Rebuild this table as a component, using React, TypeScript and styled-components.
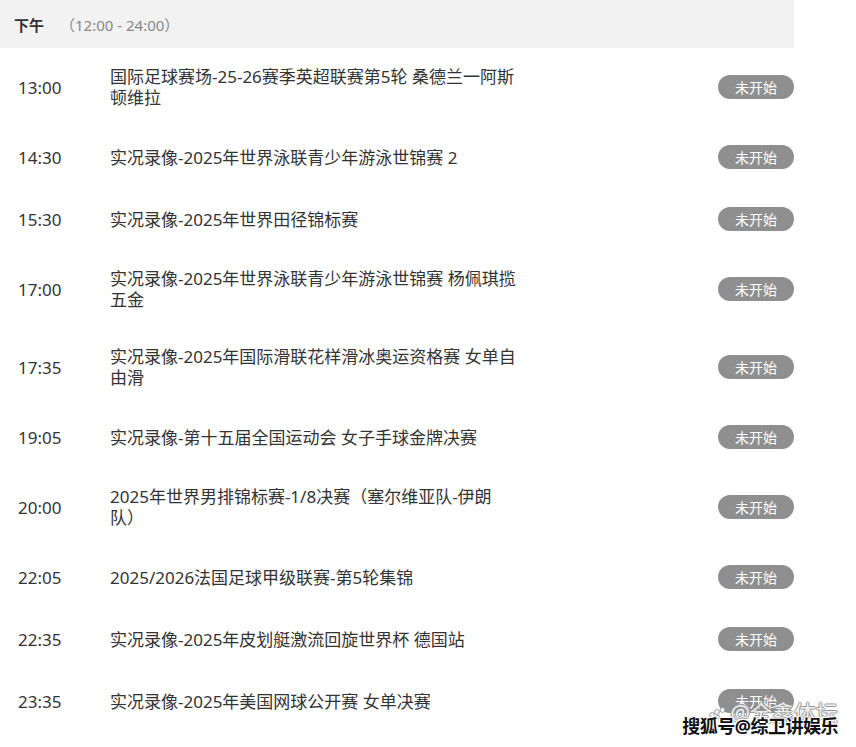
import React from "react";
import styled, {createGlobalStyle} from "styled-components";

const GlobalStyle = createGlobalStyle`
  html, body {
    margin: 0;
    padding: 0;
    background: #fff;
  }
  body {
    font-family: "Noto Sans", "Noto Sans CJK SC", sans-serif;
    color: #333;
    text-spacing-trim: space-all;
  }
`

const Page = styled.div`
  position: relative;
  width: 856px;
  height: 747px;
  overflow: hidden;
  background: #fff;
`

const Schedule = styled.div`
  width: 794px;
`

const Header = styled.div`
  height: 48px;
  background: #f2f2f2;
  display: flex;
  align-items: center;
  padding-left: 14px;
`

const Period = styled.span`
  font-size: 15px;
  font-weight: bold;
  color: #333;
  margin-right: 16px;
`

const Range = styled.span`
  font-size: 15px;
  color: #888;
`

const Row = styled.div`
  display: flex;
  align-items: center;
  padding: 18px 0 18px 18px;
`

const Time = styled.div`
  width: 92px;
  flex-shrink: 0;
  font-size: 17px;
  line-height: 21px;
  color: #333;
`

const Title = styled.div`
  width: 412px;
  font-size: 17px;
  line-height: 21px;
  color: #333;
`

const Status = styled.div`
  margin: 1px 0 1px auto;
  width: 76px;
  height: 24px;
  border-radius: 12px;
  background: #8f8f8f;
  color: #fff;
  font-size: 14px;
  display: flex;
  align-items: center;
  justify-content: center;
`

const Mark = styled.div`
  position: absolute;
  right: 18px;
  bottom: 10px;
  display: flex;
  flex-direction: column;
  align-items: flex-end;
`

const FaintMark = styled.div`
  display: flex;
  align-items: center;
  gap: 3px;
  font-size: 22px;
  line-height: 24px;
  color: rgba(255, 255, 255, 0.85);
  text-shadow: 1px 0 0 #999, -1px 0 0 #999, 0 1px 0 #999, 0 -1px 0 #999;
  margin-bottom: -9px;
`

const BoldMark = styled.div`
  font-size: 18px;
  line-height: 22px;
  font-weight: bold;
  letter-spacing: -0.5px;
  color: #111;
  text-shadow: 1px 0 0 #fff, -1px 0 0 #fff, 0 1px 0 #fff, 0 -1px 0 #fff,
  1px 1px 0 #fff, -1px -1px 0 #fff;
`

const programs = [
    {time: '13:00', title: '国际足球赛场-25-26赛季英超联赛第5轮 桑德兰一阿斯顿维拉'},
    {time: '14:30', title: '实况录像-2025年世界泳联青少年游泳世锦赛 2'},
    {time: '15:30', title: '实况录像-2025年世界田径锦标赛'},
    {time: '17:00', title: '实况录像-2025年世界泳联青少年游泳世锦赛 杨佩琪揽五金'},
    {time: '17:35', title: '实况录像-2025年国际滑联花样滑冰奥运资格赛 女单自由滑'},
    {time: '19:05', title: '实况录像-第十五届全国运动会 女子手球金牌决赛'},
    {time: '20:00', title: '2025年世界男排锦标赛-1/8决赛（塞尔维亚队-伊朗队）'},
    {time: '22:05', title: '2025/2026法国足球甲级联赛-第5轮集锦'},
    {time: '22:35', title: '实况录像-2025年皮划艇激流回旋世界杯 德国站'},
    {time: '23:35', title: '实况录像-2025年美国网球公开赛 女单决赛'},
]

function Paw() {
    return (
        <svg width="18" height="14" viewBox="0 0 18 14">
            <g fill="#fff" stroke="#999" strokeWidth="1">
                <circle cx="3" cy="10" r="2.4"/>
                <circle cx="8" cy="7" r="2.4"/>
                <circle cx="13.5" cy="5" r="2.4"/>
                <circle cx="9" cy="12" r="1.6"/>
            </g>
        </svg>
    )
}

export default function App() {
    return (
        <Page>
            <GlobalStyle/>
            <Schedule>
                <Header>
                    <Period>下午</Period>
                    <Range>（12:00 - 24:00）</Range>
                </Header>
                {programs.map((item) => (
                    <Row key={item.time}>
                        <Time>{item.time}</Time>
                        <Title>{item.title}</Title>
                        <Status>未开始</Status>
                    </Row>
                ))}
            </Schedule>
            <Mark>
                <FaintMark><Paw/>@全鑫体坛</FaintMark>
                <BoldMark>搜狐号@综卫讲娱乐</BoldMark>
            </Mark>
        </Page>
    )
}
